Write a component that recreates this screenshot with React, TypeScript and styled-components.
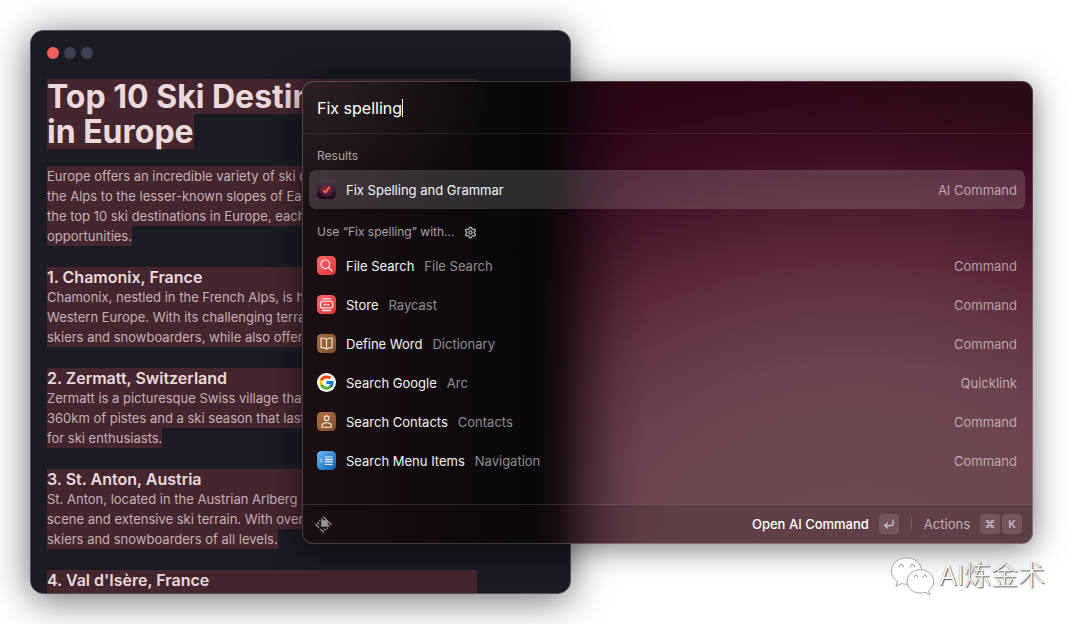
import React from 'react';
import styled, { createGlobalStyle, css } from 'styled-components';
import { SiRaycast } from 'react-icons/si';
import { FcGoogle } from 'react-icons/fc';
import { Settings, CornerDownLeft } from 'lucide-react';

const GlobalStyle = createGlobalStyle`
  *, *::before, *::after { box-sizing: border-box; }
  body { margin: 0; background: #fff; font-family: Inter, "Liberation Sans", sans-serif; }
  h1, h2, h3, p, ul { margin: 0; padding: 0; font-weight: inherit; }
  button, input { font: inherit; color: inherit; border: 0; padding: 0; background: none; outline: none; }
`;

const Desktop = styled.main`
  position: relative;
  min-height: 100vh;
  overflow: hidden;
`;

/* ---------- Editor window ---------- */

const EditorWindow = styled.article`
  position: absolute;
  inset: 30px auto 30px 30px;
  width: 50%;
  min-width: 541px;
  padding: 0 93px 0 16px;
  overflow: hidden;
  border: 1px solid #4f5356;
  border-radius: 13px;
  background: #1a1b23;
`;

const EditorShadow = styled.div`
  position: absolute;
  inset: 30px auto 30px 30px;
  width: 50%;
  min-width: 541px;
  border-radius: 13px;
  box-shadow: 0 5px 38px rgba(0, 0, 0, 0.6);
`;

const TrafficLights = styled.div`
  display: flex;
  gap: 5px;
  padding: 16px 0 20px;
`;

const Light = styled.span<{ $active?: boolean }>`
  width: 12px;
  height: 12px;
  border-radius: 50%;
  background: ${(p) => (p.$active ? '#f0605f' : '#3e4056')};
`;

const Line = styled.mark<{ $end?: boolean }>`
  display: block;
  width: ${(p) => (p.$end ? 'fit-content' : '100%')};
  background: #44272e;
  color: inherit;
  white-space: nowrap;
`;

const Document = styled.div`
  display: flex;
  flex-direction: column;
  gap: 21px;
`;

const Intro = styled.header`
  display: flex;
  flex-direction: column;
  gap: 17px;
`;

const Title = styled.h1`
  font-size: 32px;
  line-height: 35px;
  font-weight: 700;
  color: #ecd9dc;
`;

const Heading = styled.h2`
  font-size: 16px;
  line-height: 20px;
  font-weight: 600;
  color: #ecd9dc;
`;

const Paragraph = styled.p`
  font-size: 13px;
  line-height: 20px;
  color: #c5b0b5;
`;

/* ---------- Command palette ---------- */

const Palette = styled.section`
  position: absolute;
  left: 302px;
  right: 47px;
  top: 81px;
  display: flex;
  flex-direction: column;
  overflow: hidden;
  border: 1px solid rgba(255, 255, 255, 0.2);
  border-radius: 11px;
  color: #ececec;
  font-size: 13px;
  background-color: #0d0a0c;
  background-image:
    radial-gradient(ellipse 200px 130px at 0 0, rgba(255, 240, 240, 0.08), transparent),
    radial-gradient(ellipse 260px 90px at 100% 0, rgba(40, 16, 20, 0.7), transparent),
    linear-gradient(90deg, #1c0f13 0%, #120b0e 15%, #08070a 30%, #08070a 32%, rgba(8, 7, 10, 0.85) 35%, rgba(8, 7, 10, 0.4) 39%, rgba(8, 7, 10, 0.1) 43%, transparent 47%),
    radial-gradient(ellipse 660px 530px at 76% 110%, #6e4a53 0%, #6d4850 31%, #6b424d 43%, #643543 55%, #5a283a 64%, #4b1a2e 74%, #3c0b21 85%, #2e0518 97%, #280816 110%);
  background-origin: border-box;
  box-shadow: 0 4px 32px rgba(0, 0, 0, 0.55);
`;

const SearchBar = styled.label`
  display: flex;
  align-items: center;
  height: 52px;
  padding: 0 14px;
  border-bottom: 1px solid rgba(255, 255, 255, 0.08);
`;

const SearchInput = styled.input`
  field-sizing: content;
  max-width: 100%;
  font-size: 16px;
  line-height: 20px;
  color: #fff;
  caret-color: transparent;
`;

const Caret = styled.span`
  width: 1px;
  height: 18px;
  background: #fff;
`;

const Results = styled.div`
  display: flex;
  flex-direction: column;
  gap: 1px;
  padding: 0 7px 24px 6px;
`;

const GroupTitle = styled.h3`
  display: flex;
  align-items: flex-end;
  gap: 10px;
  height: 36px;
  padding: 0 8px 5px;
  font-size: 12px;
  line-height: 18px;
  color: #aaa4a7;
`;

const GearButton = styled.button`
  display: flex;
  align-items: center;
  height: 18px;
  color: #b5b0b2;
`;

const List = styled.ul`
  list-style: none;
`;

const Row = styled.button<{ $selected?: boolean }>`
  display: flex;
  align-items: center;
  width: 100%;
  height: 39px;
  padding: 0 8px;
  border-radius: 7px;
  text-align: left;
  ${(p) =>
    p.$selected &&
    css`
      background: rgba(255, 255, 255, 0.15);
    `}
`;

const RowIcon = styled.span`
  display: flex;
  width: 19px;
  height: 19px;
  margin-right: 10px;
`;

const RowTitle = styled.span`
  color: #f4f4f4;
`;

const RowSubtitle = styled.span`
  margin-left: 10px;
  color: rgba(255, 255, 255, 0.55);
`;

const RowKind = styled.span`
  margin-left: auto;
  color: rgba(255, 255, 255, 0.55);
`;

const GoogleBadge = styled.span`
  display: grid;
  place-items: center;
  width: 19px;
  height: 19px;
  border-radius: 50%;
  background: #fff;
`;

const ActionBar = styled.footer`
  display: flex;
  align-items: center;
  height: 39px;
  padding: 0 10px 0 12px;
  border-top: 1px solid rgba(255, 255, 255, 0.12);
  background: rgba(30, 10, 10, 0.16);
  color: #989496;
`;

const ActionButton = styled.button<{ $primary?: boolean }>`
  display: flex;
  align-items: center;
  gap: 10px;
  margin-left: ${(p) => (p.$primary ? 'auto' : '0')};
  font-weight: ${(p) => (p.$primary ? 500 : 400)};
  color: ${(p) => (p.$primary ? '#fff' : 'rgba(255, 255, 255, 0.6)')};
`;

const Keys = styled.span`
  display: flex;
  gap: 2px;
`;

const Key = styled.kbd`
  display: grid;
  place-items: center;
  width: 20px;
  height: 20px;
  border-radius: 4px;
  background: rgba(255, 255, 255, 0.12);
  color: rgba(255, 255, 255, 0.65);
  font-family: inherit;
  font-size: 11px;
  line-height: 20px;
  font-weight: 500;
`;

const Divider = styled.span`
  width: 1px;
  height: 12px;
  margin: 0 12px;
  background: rgba(255, 255, 255, 0.15);
`;

/* ---------- Watermark ---------- */

const Watermark = styled.div`
  position: absolute;
  right: 35px;
  bottom: 28px;
  display: flex;
  align-items: center;
  gap: 4px;
  color: #fff;
  font-family: Inter, "Noto Sans CJK SC", sans-serif;
  font-size: 27px;
  line-height: 40px;
  font-weight: 300;
  text-shadow: 1px 1px 1px #555, 0 0 1px #777;
`;

/* ---------- Icons ---------- */

const Tile = ({ id, from, to, children }: { id: string; from: string; to: string; children: React.ReactNode }) => (
  <svg width="19" height="19" viewBox="0 0 19 19" fill="none" aria-hidden="true">
    <defs>
      <linearGradient id={id} x1="0" y1="0" x2="1" y2="1">
        <stop stopColor={from} />
        <stop offset="1" stopColor={to} />
      </linearGradient>
    </defs>
    <rect width="19" height="19" rx="4.5" fill={`url(#${id})`} />
    <g stroke="#fff" strokeOpacity=".9" strokeWidth="1.1" strokeLinecap="round" strokeLinejoin="round">
      {children}
    </g>
  </svg>
);

const SpellIcon = () => (
  <svg width="19" height="19" viewBox="0 0 19 19" fill="none" aria-hidden="true">
    <defs>
      <linearGradient id="spell" x1="0" y1="0" x2="0" y2="1">
        <stop stopColor="#4a3a42" />
        <stop offset="1" stopColor="#1a0722" />
      </linearGradient>
      <radialGradient id="spell-glow">
        <stop stopColor="#a02c3a" stopOpacity=".8" />
        <stop offset="1" stopColor="#a02c3a" stopOpacity="0" />
      </radialGradient>
    </defs>
    <rect width="19" height="19" rx="4.5" fill="url(#spell)" />
    <circle cx="9.5" cy="10" r="8" fill="url(#spell-glow)" />
    <path d="M6.3 10.2l2.2 2.3 4.2-5.7" stroke="#ff5d50" strokeWidth="2" strokeLinejoin="round" />
  </svg>
);

const FileSearchIcon = () => (
  <Tile id="file" from="#ff6a6c" to="#dc3438">
    <circle cx="8.3" cy="8.3" r="4.3" />
    <path d="M11.5 11.5l3.6 3.6" />
  </Tile>
);

const StoreIcon = () => (
  <Tile id="store" from="#ff6a6c" to="#dc3438">
    <path d="M6 3.8h7.4M5.8 15.5h7.8" strokeWidth="1.3" />
    <rect x="3.4" y="6.2" width="12.4" height="6.8" rx="2.6" />
    <path d="M7.2 9.6h4.8" strokeWidth="1.3" strokeDasharray="1.4 1.9" />
  </Tile>
);

const DictionaryIcon = () => (
  <Tile id="dict" from="#a96c40" to="#81502c">
    <path d="M9.5 5.4C8 4.3 6 3.9 4 4v9.6c2-.1 4 .2 5.5 1.4 1.5-1.2 3.5-1.5 5.5-1.4V4c-2-.1-4 .3-5.5 1.4zV15" />
  </Tile>
);

const ContactsIcon = () => (
  <Tile id="contacts" from="#b0703f" to="#81502c">
    <circle cx="9.7" cy="6.2" r="2.3" />
    <path d="M5 14.8c-.4-2.6 1.7-4.1 4.7-4.1s5.1 1.5 4.7 4.1c0 .3-.2.5-.5.5H5.5c-.3 0-.5-.2-.5-.5z" />
  </Tile>
);

const MenuIcon = () => (
  <Tile id="menu" from="#6db8f6" to="#0a5fae">
    <path d="M3.5 8.2l1.5 1.5-1.5 1.5" strokeWidth="1" />
    <path d="M8.3 6h7M8.3 13.4h7" strokeWidth="1" />
    <path d="M8.3 8.5h7M8.3 10.9h7" strokeWidth="1.3" />
  </Tile>
);

const WeChatIcon = () => (
  <svg width="45" height="40" viewBox="0 0 46 40" aria-hidden="true">
    <g fill="#fff" stroke="#8d8d8d" strokeWidth=".8">
      <path d="M17 1.5C8.5 1.5 1.5 7.5 1.5 15c0 4.5 2.4 8.2 6.2 10.7L6 30.6l5.7-3c1.7.5 3.5.8 5.3.8 8.5 0 15.4-6 15.4-13.4S25.5 1.5 17 1.5z" />
      <path d="M31 13.6c-7.6 0-13.5 5.2-13.5 11.9S23.4 37.4 31 37.4c1.7 0 3.3-.3 4.8-.8l5 2.5-1.3-4.3c3.2-2.2 5.2-5.5 5.2-9.3 0-6.7-6.1-11.9-13.7-11.9z" />
    </g>
    <g fill="#fff" stroke="#777" strokeWidth=".9">
      <path d="M9.8 11a2 2 0 1 1 3.6 0M21.3 11a2 2 0 1 1 3.6 0" />
      <path d="M24.8 21.4a1.7 1.7 0 1 1 3.2 0M34.3 21.4a1.7 1.7 0 1 1 3.2 0" />
    </g>
  </svg>
);

const GoogleIcon = () => (
  <GoogleBadge>
    <FcGoogle size={17} />
  </GoogleBadge>
);

/* ---------- Content ---------- */

const intro = [
  'Europe offers an incredible variety of ski destinations',
  'the Alps to the lesser-known slopes of Eastern',
  'the top 10 ski destinations in Europe, each',
  'opportunities.',
];

const sections = [
  {
    title: '1. Chamonix, France',
    lines: [
      'Chamonix, nestled in the French Alps, is home',
      'Western Europe. With its challenging terrain',
      'skiers and snowboarders, while also offering',
    ],
    full: true,
  },
  {
    title: '2. Zermatt, Switzerland',
    lines: [
      'Zermatt is a picturesque Swiss village that',
      '360km of pistes and a ski season that lasts',
      'for ski enthusiasts.',
    ],
  },
  {
    title: '3. St. Anton, Austria',
    lines: [
      'St. Anton, located in the Austrian Arlberg region',
      'scene and extensive ski terrain. With over',
      'skiers and snowboarders of all levels.',
    ],
  },
  { title: "4. Val d'Isère, France", lines: ['\u00a0'], full: true },
];

const commands = [
  { icon: <FileSearchIcon />, title: 'File Search', subtitle: 'File Search', kind: 'Command' },
  { icon: <StoreIcon />, title: 'Store', subtitle: 'Raycast', kind: 'Command' },
  { icon: <DictionaryIcon />, title: 'Define Word', subtitle: 'Dictionary', kind: 'Command' },
  { icon: <GoogleIcon />, title: 'Search Google', subtitle: 'Arc', kind: 'Quicklink' },
  { icon: <ContactsIcon />, title: 'Search Contacts', subtitle: 'Contacts', kind: 'Command' },
  { icon: <MenuIcon />, title: 'Search Menu Items', subtitle: 'Navigation', kind: 'Command' },
];

const TextBlock = ({ lines, full }: { lines: string[]; full?: boolean }) => (
  <Paragraph>
    {lines.map((line, i) => (
      <Line key={line} $end={!full && i === lines.length - 1}>
        {line}
      </Line>
    ))}
  </Paragraph>
);

const Editor = () => (
  <EditorWindow>
    <TrafficLights>
      <Light $active />
      <Light />
      <Light />
    </TrafficLights>
    <Document>
      <Intro>
        <Title>
          <Line>Top 10 Ski Destinations</Line>
          <Line $end>in Europe</Line>
        </Title>
        <TextBlock lines={intro} />
      </Intro>
      {sections.map((s) => (
        <section key={s.title}>
          <Heading>
            <Line>{s.title}</Line>
          </Heading>
          <TextBlock lines={s.lines} full={s.full} />
        </section>
      ))}
    </Document>
  </EditorWindow>
);

const CommandPalette = () => (
  <Palette>
    <SearchBar>
      <SearchInput aria-label="Search commands" defaultValue="Fix spelling" />
      <Caret />
    </SearchBar>
    <Results>
      <section>
        <GroupTitle>Results</GroupTitle>
        <Row $selected>
          <RowIcon>
            <SpellIcon />
          </RowIcon>
          <RowTitle>Fix Spelling and Grammar</RowTitle>
          <RowKind>AI Command</RowKind>
        </Row>
      </section>
      <section>
        <GroupTitle>
          Use “Fix spelling” with...
          <GearButton aria-label="Configure fallback commands">
            <Settings size={13} strokeWidth={2.5} />
          </GearButton>
        </GroupTitle>
        <List>
          {commands.map((c) => (
            <li key={c.title}>
              <Row>
                <RowIcon>{c.icon}</RowIcon>
                <RowTitle>{c.title}</RowTitle>
                <RowSubtitle>{c.subtitle}</RowSubtitle>
                <RowKind>{c.kind}</RowKind>
              </Row>
            </li>
          ))}
        </List>
      </section>
    </Results>
    <ActionBar>
      <SiRaycast size={17} />
      <ActionButton $primary>
        Open AI Command
        <Key>
          <CornerDownLeft size={12} strokeWidth={2.5} />
        </Key>
      </ActionButton>
      <Divider />
      <ActionButton>
        Actions
        <Keys>
          <Key>⌘</Key>
          <Key>K</Key>
        </Keys>
      </ActionButton>
    </ActionBar>
  </Palette>
);

export default function App() {
  return (
    <>
      <GlobalStyle />
      <Desktop>
        <EditorShadow />
        <Editor />
        <CommandPalette />
        <Watermark>
          <WeChatIcon />
          AI炼金术
        </Watermark>
      </Desktop>
    </>
  );
}
